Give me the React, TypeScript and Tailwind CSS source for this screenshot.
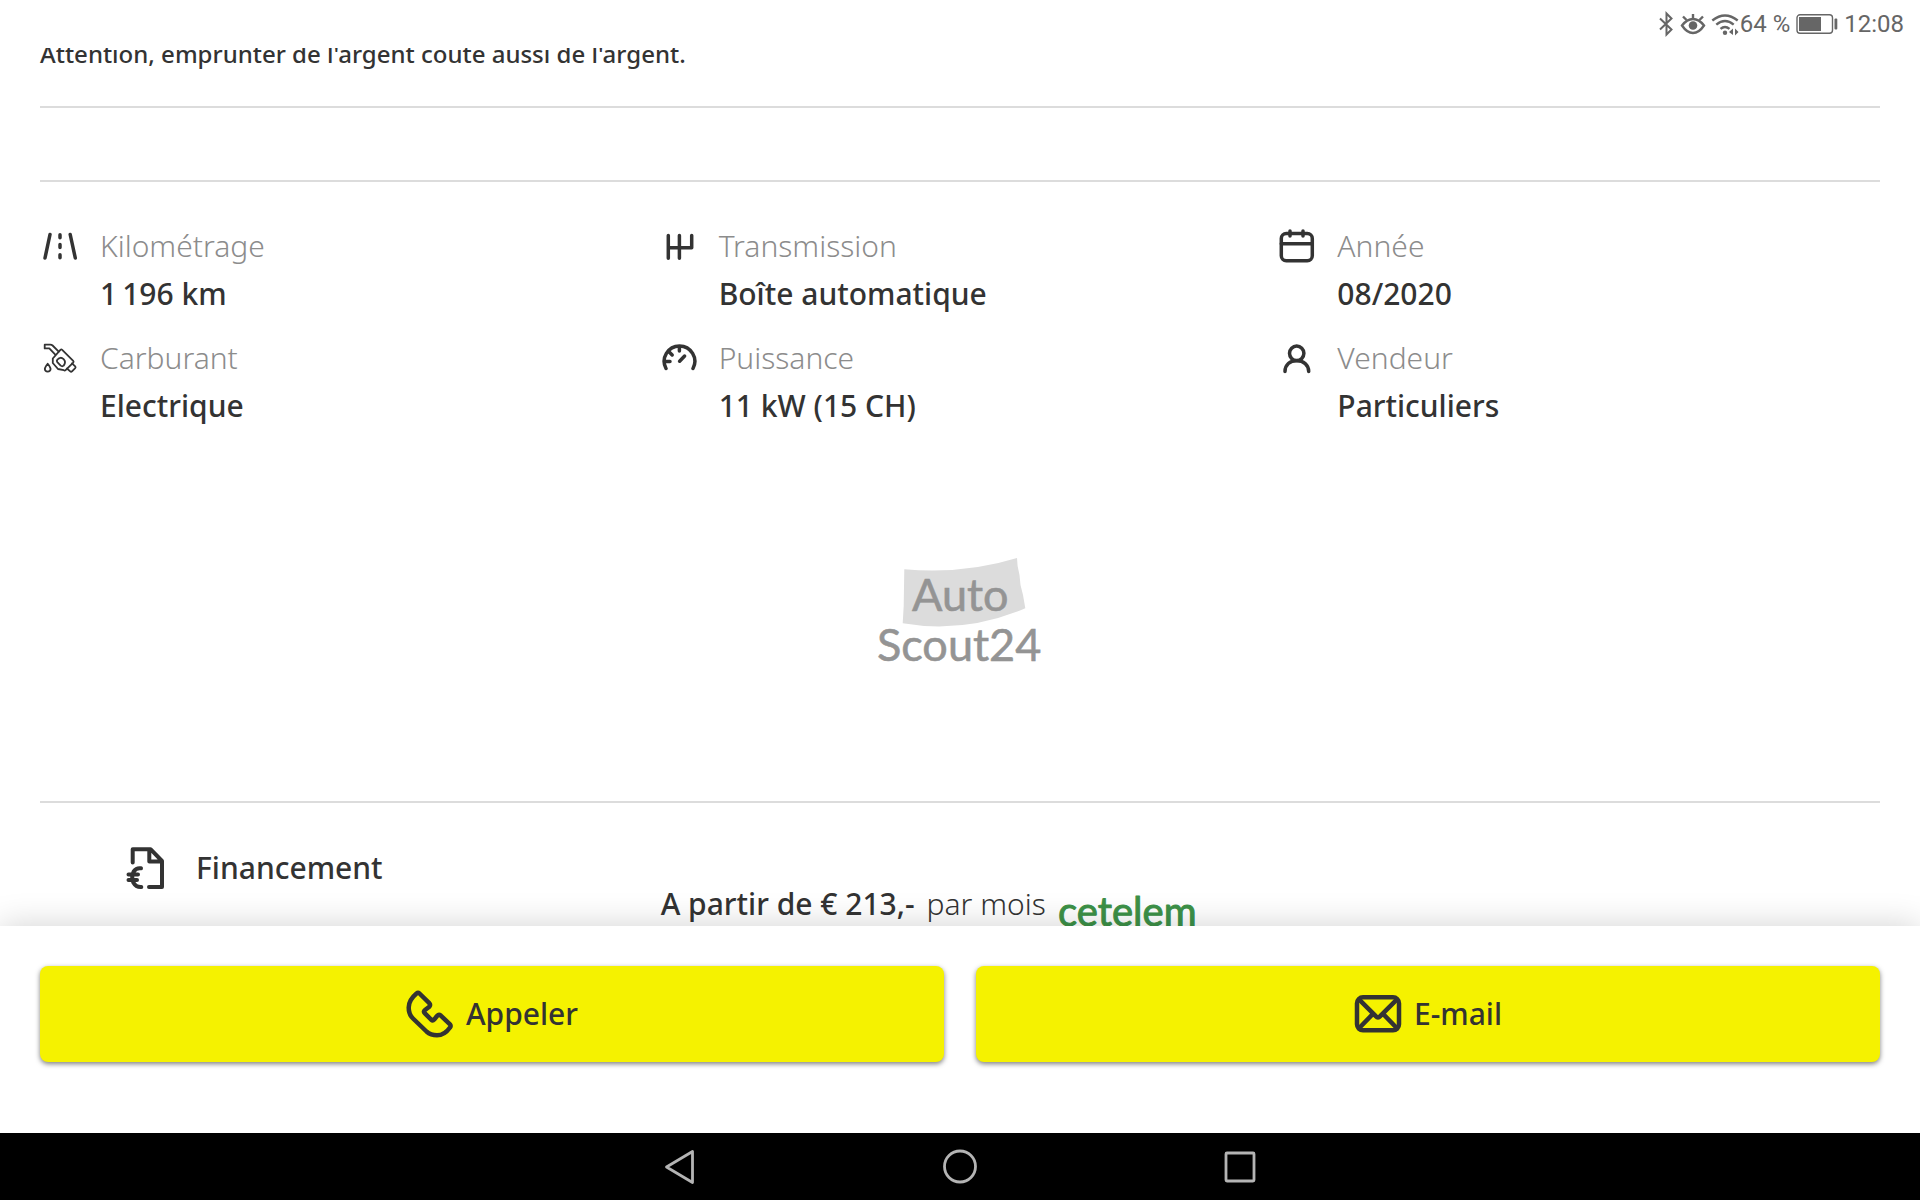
import type { ReactNode } from "react";

type Spec = { label: string; value: string; icon: ReactNode };

function SpecIcon({ children, thin }: { children: ReactNode; thin?: boolean }) {
  return (
    <svg
      viewBox="0 0 40 40"
      className="my-1 h-10 w-10 shrink-0"
      fill="none"
      stroke="currentColor"
      strokeWidth={thin ? 1.8 : 3.5}
      strokeLinecap="round"
      strokeLinejoin="round"
      aria-hidden
    >
      {children}
    </svg>
  );
}

const specs: Spec[] = [
  {
    label: "Kilométrage",
    value: "1\u202f196 km",
    icon: (
      <SpecIcon>
        <path d="M10 8.5 5 32M30.2 8.5 35.3 32M20 8.7v3M20 18.5v3M20 28.7v3" />
      </SpecIcon>
    ),
  },
  {
    label: "Transmission",
    value: "Boîte automatique",
    icon: (
      <SpecIcon>
        <path d="M9.3 9.5v22.7M20.4 9.5v22.7M9.3 21.8h23.4V9.5" />
      </SpecIcon>
    ),
  },
  {
    label: "Année",
    value: "08/2020",
    icon: (
      <SpecIcon>
        <rect x="4.3" y="7.5" width="31" height="27.3" rx="5" />
        <path d="M4.3 17.8h31M13 5v5M26 5v5" />
      </SpecIcon>
    ),
  },
  {
    label: "Carburant",
    value: "Electrique",
    icon: (
      <SpecIcon thin>
        <path d="M18.7 13.6 12.6 7.5Q11.6 6.7 10.3 6.7H4.7v3.7H9.3l6 6.2" />
        <path d="M22.2 11.8 33.2 22.8Q34 23.7 33.2 24.6L25.6 32.2Q24.7 33 23.8 32.2L18 31 12.8 25V20.5L20.4 11.8Q21.3 11 22.2 11.8Z" />
        <path d="M17.5 21.5Q20.5 18.2 23.6 21.2 26.4 24 23.7 27.6 22.2 28.8 20.7 27.6L17.3 24.2Q16.2 22.8 17.5 21.5Z" />
        <path d="M32 25.4 35.2 28.4Q36 29.3 35.2 30.2L32 33.4Q31.1 34.2 30.2 33.4L27 30.5" />
        <path d="M7.7 25.7Q4.8 29.3 4.8 31 5 33.6 7.7 33.6 10.4 33.6 10.6 31 10.6 29.3 7.7 25.7Z" />
      </SpecIcon>
    ),
  },
  {
    label: "Puissance",
    value: "11 kW (15 CH)",
    icon: (
      <SpecIcon>
        <path d="M7 30.5A15.3 15.3 0 1 1 34 30.5" />
        <path d="M6 23.6h5M10.2 14l3 3M20.4 9v4M20.6 23.2l5-5.2" />
      </SpecIcon>
    ),
  },
  {
    label: "Vendeur",
    value: "Particuliers",
    icon: (
      <SpecIcon>
        <circle cx="19.7" cy="15.3" r="7.2" />
        <path d="M8 33.5C8 26.7 13 22.7 19.7 22.7S31.7 26.7 31.7 33.5" />
      </SpecIcon>
    ),
  },
];

function StatusBar() {
  return (
    <header className="flex h-12 shrink-0 items-center justify-end pr-4 font-[Roboto,sans-serif] text-2xl text-[#666]">
      <svg viewBox="0 0 84 28" className="h-7 w-[84px]" fill="none" stroke="currentColor" strokeWidth="2" aria-hidden>
        {/* bluetooth */}
        <path d="M4 8.5 15.5 19.5 10.5 24.5V3.5L15.5 8.5 4 19.5" />
        {/* eye */}
        <path d="M26 15.5Q31 9 37 9T48 15.5Q43 23 37 23T26 15.5Z" strokeWidth="2.4" />
        <circle cx="37" cy="15.5" r="4.3" fill="currentColor" stroke="none" />
        <path d="M37 9V4M30.5 10 27 6.5M43.5 10 47 6.5" strokeWidth="2.4" />
        {/* wifi */}
        <path d="M56.3 10.5Q69 .5 81.7 10.5M60.3 14.7Q69 7.5 77.7 14.7M64.5 18.8Q69 15 73.5 18.8" strokeWidth="2.4" />
        <circle cx="69" cy="22.7" r="2.2" fill="currentColor" stroke="none" />
        <path d="M73 22 77 18.5V25ZM82.5 22 79 18.5V25.5Z" fill="currentColor" stroke="none" />
      </svg>
      <span>64 %</span>
      <svg viewBox="0 0 42 20" className="ml-1.5 h-5 w-[42px]" fill="none" aria-hidden>
        <rect x="1" y=".8" width="35.5" height="18.4" rx="3" stroke="currentColor" strokeWidth="1.4" />
        <rect x="3" y="3" width="22" height="14" fill="currentColor" />
        <rect x="38.5" y="4.5" width="2.8" height="11" rx="1" fill="currentColor" />
      </svg>
      <time className="ml-1.5">12:08</time>
    </header>
  );
}

function ScoutLogo() {
  return (
    <svg
      viewBox="0 0 164 108"
      className="h-[108px] w-[164px] overflow-visible"
      role="img"
      aria-label="AutoScout24"
    >
      <path
        d="M26.3 11.3Q86 16.5 139 0L139.6 8 141.5 17 142.5 27 145 37 147.3 50.3Q87 76 24.7 65.3L25.7 48Z"
        fill="#dcdcdc"
      />
      <g fill="#949494" stroke="#949494" strokeWidth="0.6" fontFamily="Lato, sans-serif" fontSize="45">
        <text x="34" y="53">Auto</text>
        <text x="-1" y="103">Scout24</text>
      </g>
    </svg>
  );
}

function Financing() {
  return (
    <section className="grid grid-cols-3 gap-x-4 border-t-2 border-[#dcdcdc] pt-[41px]">
      <div className="flex items-start gap-7 pl-[84px]">
        <svg
          viewBox="0 0 44 48"
          className="h-12 w-11"
          fill="none"
          stroke="currentColor"
          strokeWidth="4"
          strokeLinecap="round"
          strokeLinejoin="round"
          aria-hidden
        >
          <path d="M8.7 18.5V5.2H26.5L38 17V43H25M25.3 6V17.5H37.5" />
          <path d="M17 24.3Q12.5 23.5 9.7 27.5 7 32.7 9.3 38.5 12 43.3 17.3 43M4.5 30.5H14M4.5 36H13" />
        </svg>
        <h2 className="font-medium">Financement</h2>
      </div>
      <div className="col-span-2 flex items-start pl-0.5 pt-9">
        <p>
          <span className="font-medium">A partir de € 213,-</span>
          <span className="ml-3 font-light">par mois</span>
        </p>
        <svg viewBox="0 0 144 48" className="mt-2 ml-3 h-12 w-36 overflow-visible" role="img" aria-label="cetelem">
          <text
            x="0"
            y="38"
            fontFamily="Lato, sans-serif"
            fontSize="40"
            fill="#3c9147"
            stroke="#3c9147"
            strokeWidth="1"
            strokeLinejoin="round"
          >
            cetelem
          </text>
        </svg>
      </div>
    </section>
  );
}

function ContactBar() {
  const button =
    "flex h-24 items-center justify-center gap-3 rounded-lg bg-[#f5f200] font-medium shadow-[0_2px_5px_rgba(0,0,0,0.5)]";
  return (
    <footer className="relative grid shrink-0 grid-cols-2 gap-8 bg-white px-10 pt-10 pb-[71px] shadow-[0_0_32px_rgba(0,0,0,0.18)]">
      <button type="button" className={button}>
        <svg viewBox="0 0 48 48" className="h-12 w-12" fill="none" stroke="currentColor" strokeWidth="4.5" strokeLinejoin="round" aria-hidden>
          <path d="M10.5 3.5Q12 2.3 13.5 3.5L23.3 13.2Q24.8 15 23.3 16.7L19 20Q17 21.5 18.7 23.2L25.2 29.7Q26.8 31 28.2 29.5L31 26Q32.8 24 34.8 25.6L44 34.3Q45.2 36 44 37.5 38.5 45.3 31 45.3 24.8 45.3 20.5 41.5L7 28.5Q2.7 24.5 2.7 17.5 2.7 10 10.5 3.5Z" />
        </svg>
        Appeler
      </button>
      <button type="button" className={button}>
        <svg viewBox="0 0 48 48" className="h-12 w-12" fill="none" stroke="currentColor" strokeWidth="4.5" strokeLinejoin="round" aria-hidden>
          <rect x="3" y="7.3" width="42" height="33" rx="6" />
          <path d="M5 9.3 21.8 26.2Q24 28.6 26.2 26.2L43 9.3M5 38.3 19 23.8M43 38.3 29 23.8" />
        </svg>
        E-mail
      </button>
    </footer>
  );
}

function SystemNav() {
  return (
    <nav className="relative flex h-[67px] shrink-0 items-center justify-center gap-60 bg-black text-[#b4b4b4]">
      <button type="button" aria-label="Retour">
        <svg viewBox="0 0 40 40" className="h-10 w-10" fill="none" stroke="currentColor" strokeWidth="2.8" strokeLinejoin="round">
          <path d="M32.5 4.5V35.5L6.5 20Z" />
        </svg>
      </button>
      <button type="button" aria-label="Accueil">
        <svg viewBox="0 0 40 40" className="h-10 w-10" fill="none" stroke="currentColor" strokeWidth="2.8">
          <circle cx="20" cy="19.5" r="15.5" />
        </svg>
      </button>
      <button type="button" aria-label="Applications récentes">
        <svg viewBox="0 0 40 40" className="h-10 w-10" fill="none" stroke="currentColor" strokeWidth="2.8">
          <rect x="6" y="6" width="28" height="28" rx="1" />
        </svg>
      </button>
    </nav>
  );
}

export default function App() {
  return (
    <div className="flex h-screen flex-col overflow-hidden bg-white font-['Noto_Sans',sans-serif] text-[30px] leading-[48px] text-[#333]">
      <StatusBar />
      <main className="min-h-0 flex-1 overflow-hidden px-10">
        {/* scrolled partly under the status bar */}
        <p className="-mt-[10px] pb-9 text-2xl leading-8 font-medium">
          Attention, emprunter de l'argent coute aussi de l'argent.
        </p>
        <div className="h-[76px] border-y-2 border-[#dcdcdc]" />
        <dl className="grid grid-cols-3 gap-4 pt-10">
          {specs.map((spec) => (
            <div key={spec.label} className="flex gap-5">
              {spec.icon}
              <div>
                <dt className="font-light text-[#8c8c8c]">{spec.label}</dt>
                <dd className="font-medium">{spec.value}</dd>
              </div>
            </div>
          ))}
        </dl>
        <div className="flex justify-center pt-32 pb-[135px]">
          <ScoutLogo />
        </div>
        <Financing />
      </main>
      <ContactBar />
      <SystemNav />
    </div>
  );
}
